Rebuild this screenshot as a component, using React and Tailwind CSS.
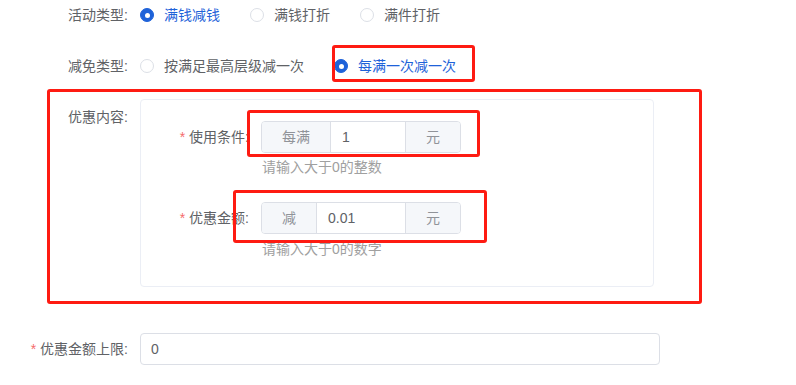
import React from 'react';

const font = { fontFamily: '"Liberation Sans", "Noto Sans CJK SC", sans-serif' };

const Radio = ({ label, checked }) => (
  <label className="flex items-center mr-[30px] cursor-pointer">
    <span
      className={
        checked
          ? 'w-[14px] h-[14px] rounded-full bg-[#1e62d9] border border-[#1e62d9] flex items-center justify-center'
          : 'w-[14px] h-[14px] rounded-full bg-white border border-[#dcdfe6]'
      }
    >
      {checked && <span className="w-[5px] h-[5px] rounded-full bg-white" />}
    </span>
    <span className={checked ? 'ml-[10px] text-[#1e62d9]' : 'ml-[10px] text-[#606266]'}>{label}</span>
  </label>
);

const InputGroup = ({ prepend, value, append }) => (
  <div className="flex w-[200px] h-8 border border-[#dcdfe6] rounded-[4px] overflow-hidden">
    <div className="px-5 flex items-center bg-[#f5f7fa] text-[#909399] border-r border-[#dcdfe6]">{prepend}</div>
    <div className="flex-1 flex items-center px-[11px] text-[#606266]">{value}</div>
    <div className="px-5 flex items-center bg-[#f5f7fa] text-[#909399] border-l border-[#dcdfe6]">{append}</div>
  </div>
);

const Required = () => <span className="text-[#f56c6c] mr-[4px]">*</span>;

export default function App() {
  return (
    <div className="bg-white w-[796px] h-[385px] overflow-hidden text-[14px]" style={font}>
      {/* 活动类型 */}
      <div className="flex items-center h-[30px]">
        <div className="w-[140px] pr-3 text-right text-[#606266]">活动类型:</div>
        <Radio label="满钱减钱" checked />
        <Radio label="满钱打折" />
        <Radio label="满件打折" />
      </div>

      {/* 减免类型 */}
      <div className="flex items-center h-8 mt-5">
        <div className="w-[140px] pr-3 text-right text-[#606266]">减免类型:</div>
        <Radio label="按满足最高层级减一次" />
        <div className="relative">
          <Radio label="每满一次减一次" checked />
          <div className="absolute left-[-2px] top-[-11px] w-[143px] h-[37px] border-[3px] border-[#fe1b12] rounded-[3px] pointer-events-none" />
        </div>
      </div>

      {/* 优惠内容 */}
      <div className="relative flex mt-[17px]">
        <div className="w-[140px] pr-3 text-right text-[#606266] mt-[2px] leading-8">优惠内容:</div>
        <div className="w-[514px] h-[188px] border border-[#ebeef5] rounded-[4px] pt-[21px]">
          <div className="flex items-center">
            <div className="w-[120px] pr-3 text-right text-[#606266]">
              <Required />使用条件:
            </div>
            <div className="relative">
              <InputGroup prepend="每满" value="1" append="元" />
              <div className="absolute left-[-14px] top-[-11px] w-[233px] h-[47px] border-[3px] border-[#fe1b12] rounded-[3px] pointer-events-none" />
            </div>
          </div>
          <div className="ml-[121px] mt-[4px] leading-5 text-[#a0a0a0]">请输入大于0的整数</div>

          <div className="flex items-center mt-[25px]">
            <div className="w-[120px] pr-3 text-right text-[#606266]">
              <Required />优惠金额:
            </div>
            <div className="relative">
              <InputGroup prepend="减" value="0.01" append="元" />
              <div className="absolute left-[-28px] top-[-12px] w-[254px] h-[53px] border-[3px] border-[#fe1b12] rounded-[3px] pointer-events-none" />
            </div>
          </div>
          <div className="ml-[121px] mt-[5px] leading-5 text-[#a0a0a0]">请输入大于0的数字</div>
        </div>
        <div className="absolute left-[47px] top-[-10px] w-[655px] h-[215px] border-[3px] border-[#fe1b12] rounded-[3px] pointer-events-none" />
      </div>

      {/* 优惠金额上限 */}
      <div className="flex items-center mt-[46px]">
        <div className="w-[140px] pr-3 text-right text-[#606266]">
          <Required />优惠金额上限:
        </div>
        <div className="w-[520px] h-8 border border-[#dcdfe6] rounded-[4px] flex items-center px-[10px] text-[#606266]">0</div>
      </div>
    </div>
  );
}
